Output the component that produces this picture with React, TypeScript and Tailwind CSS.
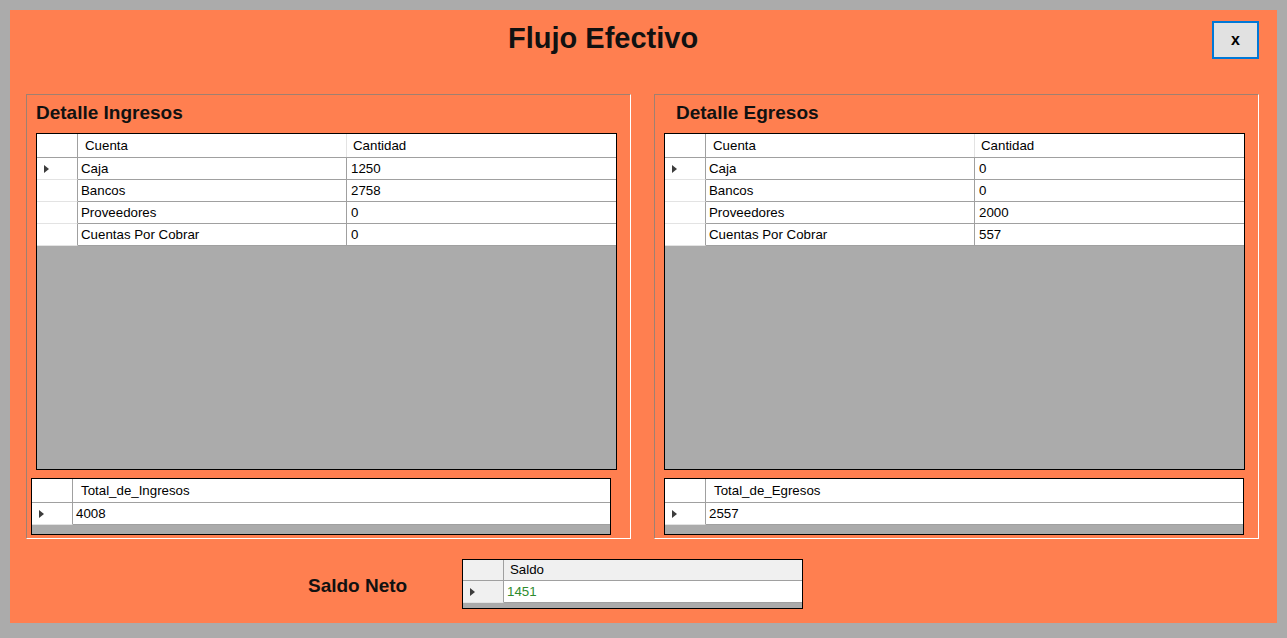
import React from 'react';

type Col = { label: string; w: string; hpad: string; cpad: string };

function Arrow() {
  return (
    <span className="block w-0 h-0 border-y-[4px] border-y-transparent border-l-[5px] border-l-[#3c3c3c]" />
  );
}

function Grid({
  className,
  cols,
  rows,
  headerH = 'h-[24px]',
  rowH = 'h-[22px]',
  headBg = 'bg-white',
  valueColor = 'text-black',
}: {
  className: string;
  cols: Col[];
  rows: string[][];
  headerH?: string;
  rowH?: string;
  headBg?: string;
  valueColor?: string;
}) {
  return (
    <div className={`border border-black bg-[#ababab] flex flex-col overflow-hidden text-[13.3px] ${className}`}>
      <div className={`flex shrink-0 border-b border-[#a0a0a0] ${headerH} ${headBg}`}>
        <div className="w-[41px] shrink-0 border-r border-[#a0a0a0]" />
        {cols.map((c, i) => (
          <div
            key={c.label}
            className={`flex items-center ${c.w} ${c.hpad} ${i < cols.length - 1 ? 'border-r border-[#e3e3e3]' : ''}`}
          >
            {c.label}
          </div>
        ))}
      </div>
      {rows.map((r, ri) => (
        <div key={ri} className={`flex shrink-0 ${rowH}`}>
          <div
            className={`w-[41px] shrink-0 flex items-center pl-[7px] border-r border-b border-r-[#a0a0a0] border-b-[#e3e3e3] ${headBg}`}
          >
            {ri === 0 && <Arrow />}
          </div>
          {r.map((v, ci) => (
            <div
              key={ci}
              className={`flex items-center bg-white border-b border-[#a0a0a0] ${cols[ci].w} ${cols[ci].cpad} ${
                ci < r.length - 1 ? 'border-r' : ''
              } ${valueColor}`}
            >
              {v}
            </div>
          ))}
        </div>
      ))}
    </div>
  );
}

const mainCols: Col[] = [
  { label: 'Cuenta', w: 'w-[269px]', hpad: 'pl-[7px]', cpad: 'pl-[3px]' },
  { label: 'Cantidad', w: 'flex-1', hpad: 'pl-[6px]', cpad: 'pl-[4px]' },
];

function GroupBox({
  title,
  titlePad,
  rows,
  totalLabel,
  total,
  totalOffset,
}: {
  title: string;
  titlePad: string;
  rows: string[][];
  totalLabel: string;
  total: string;
  totalOffset: string;
}) {
  return (
    <div className="w-[605px] h-[445px] flex flex-col border border-t-[#a08070] border-l-[#a08070] border-r-white border-b-white">
      <h2 className={`pt-[8px] ${titlePad} text-[19px] leading-[19px] font-bold text-[#111]`}>{title}</h2>
      <Grid className="ml-[9px] mt-[11px] w-[581px] h-[337px]" cols={mainCols} rows={rows} />
      <Grid
        className={`${totalOffset} mt-[8px] w-[580px] h-[57px]`}
        cols={[{ label: totalLabel, w: 'flex-1', hpad: 'pl-[8px]', cpad: 'pl-[3px]' }]}
        rows={[[total]]}
      />
    </div>
  );
}

export default function App() {
  return (
    <div className="w-[1287px] h-[638px] bg-[#ababab] pt-[10px] pl-[10px] overflow-hidden">
      <div
        className="w-[1267px] h-[613px] bg-[#ff7f50] flex flex-col text-black"
        style={{ fontFamily: '"Liberation Sans", Arial, sans-serif' }}
      >
        <div className="h-[84px] shrink-0 flex items-start pt-[11px] pr-[18px]">
          <h1 className="ml-[498px] mt-[3px] text-[29px] leading-[29px] font-bold text-[#111]">
            Flujo Efectivo
          </h1>
          <button className="ml-auto w-[47px] h-[38px] bg-[#e1e1e1] border-2 border-[#0078d7] text-[16px] font-bold flex items-center justify-center">
            x
          </button>
        </div>

        <div className="flex pl-[16px] gap-[23px]">
          <GroupBox
            title="Detalle Ingresos"
            titlePad="pl-[9px]"
            rows={[
              ['Caja', '1250'],
              ['Bancos', '2758'],
              ['Proveedores', '0'],
              ['Cuentas Por Cobrar', '0'],
            ]}
            totalLabel="Total_de_Ingresos"
            total="4008"
            totalOffset="ml-[4px]"
          />
          <GroupBox
            title="Detalle Egresos"
            titlePad="pl-[21px]"
            rows={[
              ['Caja', '0'],
              ['Bancos', '0'],
              ['Proveedores', '2000'],
              ['Cuentas Por Cobrar', '557'],
            ]}
            totalLabel="Total_de_Egresos"
            total="2557"
            totalOffset="ml-[9px]"
          />
        </div>

        <div className="flex items-start mt-[20px]">
          <span className="ml-[298px] mt-[17px] w-[154px] shrink-0 text-[19px] leading-[19px] font-bold text-[#111]">
            Saldo Neto
          </span>
          <Grid
            className="w-[341px] h-[50px]"
            cols={[{ label: 'Saldo', w: 'flex-1', hpad: 'pl-[6px]', cpad: 'pl-[3px]' }]}
            rows={[['1451']]}
            headerH="h-[21px]"
            rowH="h-[22px]"
            headBg="bg-[#f0f0f0]"
            valueColor="text-[#2e8b2e]"
          />
        </div>
      </div>
    </div>
  );
}
